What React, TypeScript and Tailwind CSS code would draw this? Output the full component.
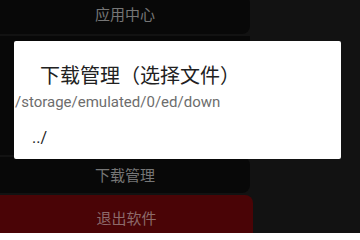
import React from 'react';

const FONT = '"Noto Sans CJK SC", Roboto, "Noto Sans", sans-serif';

/** Drawer menu rows seen behind the dialog. */
function DrawerItem({ label, className }: { label: string; className: string }) {
  return (
    <div
      className={`flex items-center justify-center rounded-r-lg text-[15px] ${className}`}
    >
      {label}
    </div>
  );
}

export default function App() {
  return (
    <div
      className="relative w-[360px] h-[233px] overflow-hidden bg-[#121212]"
      style={{ fontFamily: FONT }}
    >
      {/* drawer, dimmed by the dialog scrim */}
      <div className="flex flex-col gap-[2px] w-[250px] -mt-[5px]">
        <DrawerItem label="应用中心" className="h-[39px] bg-[#080808] text-[#767676]" />
        <div className="h-[119px] bg-[#080808]" />
        <DrawerItem label="下载管理" className="h-[36px] bg-[#080808] text-[#767676]" />
        <DrawerItem
          label="退出软件"
          className="h-[46px] w-[253px] rounded-r-2xl bg-[#4a0406] text-[#8d6a6b]"
        />
      </div>

      {/* file picker dialog */}
      <div className="absolute left-[14px] top-[41px] w-[327px] h-[118px] rounded-[2px] bg-white">
        <div className="pl-[26px] pt-[22px] text-[20px] leading-[24px] text-[#212121]">
          下载管理（选择文件）
        </div>
        <div
          className="pl-[1px] pt-[6px] text-[15px] leading-[18px] text-[#6d6d6d]"
          style={{ fontFamily: 'Roboto, sans-serif' }}
        >
          /storage/emulated/0/ed/down
        </div>
        <div
          className="pl-[18px] pt-[17px] text-[16px] leading-[20px] text-[#212121]"
          style={{ fontFamily: 'Roboto, sans-serif' }}
        >
          ../
        </div>
      </div>
    </div>
  );
}
